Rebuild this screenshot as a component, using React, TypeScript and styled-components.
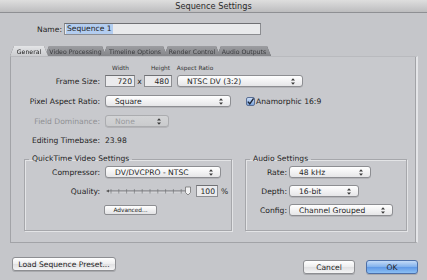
import React from "react";
import styled, { createGlobalStyle } from "styled-components";

const GlobalStyles = createGlobalStyle`
  html, body {
    margin: 0;
    padding: 0;
    background: #c5c6ca;
  }
  body {
    font-family: "DejaVu Sans", sans-serif;
    font-size: 7.6px;
    color: #1e1e1e;
  }
`;

const Window = styled.div`
  width: 427px;
  height: 280px;
  display: flex;
  flex-direction: column;
  overflow: hidden;
  background: #c5c6ca;
`;

const TitleBar = styled.div`
  height: 12px;
  flex: none;
  border-bottom: 1px solid #8e8f93;
  background: linear-gradient(#dedede, #bdbdbf);
  display: flex;
  align-items: center;
  justify-content: center;
  font-size: 8.2px;
  color: #2a2a2a;
`;

const Body = styled.div`
  display: flex;
  flex-direction: column;
  padding: 0 9px 0 10px;
`;

const NameRow = styled.div`
  display: flex;
  align-items: center;
  gap: 2px;
  margin-top: 10px;
  padding-left: 27px;
  height: 12px;
`;

const NameField = styled.div`
  width: 194px;
  height: 10px;
  border: 1px solid #8c8d91;
  border-top-color: #6f7074;
  background: #e9eaec;
  display: flex;
  align-items: center;
  padding-left: 1px;
`;

const Selected = styled.span`
  background: #b3cdf0;
  padding: 0 1px;
  line-height: 10px;
`;

const TabBar = styled.div`
  display: flex;
  margin-top: 11px;
  height: 10px;
  filter: drop-shadow(0 0 0.6px #55565a);
`;

const Tab = styled.div<{ $w: number; $active?: boolean }>`
  width: ${p => p.$w}px;
  margin-right: -3px;
  height: 10px;
  display: flex;
  align-items: center;
  justify-content: center;
  font-size: 6.2px;
  clip-path: polygon(4px 0, calc(100% - 4px) 0, 100% 100%, 0 100%);
  background: ${p => (p.$active ? "linear-gradient(#e4e5e7, #cacbce)" : "linear-gradient(#9c9da1, #85868a)")};
  color: ${p => (p.$active ? "#222" : "#3a3b3e")};
  position: relative;
  z-index: ${p => (p.$active ? 2 : 1)};
`;

const Panel = styled.div`
  height: 179px;
  border: 1px solid #a2a3a7;
  border-top-color: #b9babe;
  border-right: 2px solid #e4e5e8;
  box-shadow: inset -1px 0 0 #a2a3a7;
  background: #c8c9cd;
  display: flex;
  flex-direction: column;
  padding-top: 6px;
`;

const Rows = styled.div<{ $gap: number }>`
  display: flex;
  flex-direction: column;
  gap: ${p => p.$gap}px;
`;

const Row = styled.div<{ $gap?: number; $h?: number }>`
  display: flex;
  align-items: center;
  gap: ${p => p.$gap ?? 5}px;
  height: ${p => p.$h ?? 12}px;
`;

const Label = styled.div<{ $w: number; $disabled?: boolean }>`
  width: ${p => p.$w}px;
  flex: none;
  text-align: right;
  white-space: nowrap;
  color: ${p => (p.$disabled ? "#8f9094" : "#1e1e1e")};
`;

const Caption = styled.div<{ $w: number; $align?: string }>`
  width: ${p => p.$w}px;
  font-size: 5.8px;
  color: #333;
  text-align: ${p => p.$align ?? "center"};
`;

const NumField = styled.div<{ $w: number }>`
  width: ${p => p.$w}px;
  height: 10px;
  border: 1px solid #8c8d91;
  border-top-color: #707175;
  background: #ebebed;
  display: flex;
  align-items: center;
  justify-content: flex-end;
  padding-right: 2px;
  box-sizing: content-box;
`;

const Times = styled.span`
  width: 7px;
  text-align: center;
  margin: 0 -4px;
`;

const Select = styled.div<{ $w: number; $disabled?: boolean }>`
  width: ${p => p.$w}px;
  height: 10px;
  box-sizing: content-box;
  border: 1px solid ${p => (p.$disabled ? "#abacaf" : "#8d8e92")};
  border-radius: 3px;
  background: ${p => (p.$disabled ? "linear-gradient(#d3d4d6, #cacbcd)" : "linear-gradient(#ffffff, #e6e6e8)")};
  color: ${p => (p.$disabled ? "#9a9b9e" : "#1e1e1e")};
  display: flex;
  align-items: center;
  justify-content: space-between;
  padding: 0 7px 0 9px;
  box-shadow: 0 0.5px 0 #9fa0a4;
`;

const Check = styled.div`
  width: 7px;
  height: 7px;
  border: 1px solid #5a6f95;
  border-radius: 2px;
  background: linear-gradient(#c9dcf6, #7ea6de);
  display: flex;
  align-items: center;
  justify-content: center;
  margin-left: 10px;
  margin-right: -4px;
`;

const Groups = styled.div`
  display: flex;
  gap: 13px;
  margin-top: 8px;
  padding-left: 13px;
`;

const Group = styled.fieldset<{ $w: number }>`
  width: ${p => p.$w}px;
  height: 77px;
  margin: 0;
  padding: 2px 0 0;
  box-sizing: border-box;
  border: 1px solid #a6a7ab;
  box-shadow: inset 1px 1px 0 #e3e4e6, 1px 1px 0 #e3e4e6;
  display: flex;
  flex-direction: column;
  gap: 7px;
`;

const Legend = styled.legend`
  margin-left: 4px;
  padding: 0 3px;
  font-size: 7.6px;
  line-height: 10px;
`;

const Slider = styled.div`
  display: flex;
  align-items: center;
  gap: 3px;
`;

const Small = styled.button`
  font-family: inherit;
  font-size: 5.8px;
  width: 53px;
  height: 10px;
  padding: 0;
  margin: 2px 0 0 79px;
  border: 1px solid #8d8e92;
  border-radius: 2px;
  background: linear-gradient(#ffffff, #e2e2e4);
  color: #222;
`;

const Footer = styled.div`
  display: flex;
  align-items: flex-start;
  padding: 14px 0 0 2px;
`;

const Button = styled.button<{ $w: number; $primary?: boolean; $mt?: number }>`
  font-family: inherit;
  font-size: 7.6px;
  width: ${p => p.$w}px;
  height: 14px;
  padding: 0;
  margin-top: ${p => p.$mt ?? 0}px;
  border: 1px solid ${p => (p.$primary ? "#4c6fa8" : "#8d8e92")};
  border-radius: 3px;
  background: ${p => (p.$primary ? "linear-gradient(#c4dbf7, #80b0ec 50%, #5f98e6 51%, #8cc0f4)" : "linear-gradient(#ffffff, #ededee 50%, #e0e0e2 51%, #f4f4f5)")};
  color: #1e1e1e;
  box-shadow: 0 1px 0 #a8a9ad;
`;

const Spacer = styled.div`
  flex: 1;
`;

function Arrows() {
  return (
    <svg width="4" height="7" viewBox="0 0 4 7">
      <path d="M0 2.6 L2 0.2 L4 2.6 Z M0 4.4 L2 6.8 L4 4.4 Z" fill="#3a3a3a" />
    </svg>
  );
}

function Dropdown({ w, value, disabled }: { w: number; value: string; disabled?: boolean }) {
  return (
    <Select $w={w - 18} $disabled={disabled}>
      <span>{value}</span>
      <Arrows />
    </Select>
  );
}

function QualitySlider() {
  const ticks = Array.from({ length: 11 }, (_, i) => 6 + i * 7.8);
  return (
    <svg width="88" height="10" viewBox="0 0 88 10">
      <path d="M1 5 L4 3.5 L4 6.5 Z" fill="#555" />
      <line x1="4" y1="5" x2="83" y2="5" stroke="#6a6b6f" strokeWidth="1" />
      <line x1="4" y1="6" x2="83" y2="6" stroke="#e6e6e8" strokeWidth="0.6" />
      {ticks.map(x => (
        <line key={x} x1={x} y1="3" x2={x} y2="7.5" stroke="#6a6b6f" strokeWidth="0.6" />
      ))}
      <path d="M80.5 1 H85.5 V6.5 L83 9 L80.5 6.5 Z" fill="#f2f2f3" stroke="#666" strokeWidth="0.7" />
    </svg>
  );
}

export default function App() {
  return (
    <Window>
      <GlobalStyles />
      <TitleBar>Sequence Settings</TitleBar>
      <Body>
        <NameRow>
          <span>Name:</span>
          <NameField>
            <Selected>Sequence 1</Selected>
          </NameField>
        </NameRow>

        <TabBar>
          <Tab $w={38} $active>General</Tab>
          <Tab $w={61}>Video Processing</Tab>
          <Tab $w={64}>Timeline Options</Tab>
          <Tab $w={56}>Render Control</Tab>
          <Tab $w={54}>Audio Outputs</Tab>
        </TabBar>

        <Panel>
          <Rows $gap={8}>
            <Rows $gap={3}>
              <Row $h={9} $gap={0}>
                <Label $w={94} />
                <Caption $w={31}>Width</Caption>
                <Caption $w={10} />
                <Caption $w={29}>Height</Caption>
                <Caption $w={40} $align="left">&nbsp;Aspect Ratio</Caption>
              </Row>
              <Row>
                <Label $w={89}>Frame Size:</Label>
                <NumField $w={26}>720</NumField>
                <Times>x</Times>
                <NumField $w={24}>480</NumField>
                <Dropdown w={126} value="NTSC DV (3:2)" />
              </Row>
            </Rows>
            <Row>
              <Label $w={89}>Pixel Aspect Ratio:</Label>
              <Dropdown w={126} value="Square" />
              <Check>
                <svg width="7" height="7" viewBox="0 0 7 7">
                  <path d="M0.8 3.6 L2.8 5.8 L6.6 0.4" fill="none" stroke="#1b2436" strokeWidth="1.4" />
                </svg>
              </Check>
              <span>Anamorphic 16:9</span>
            </Row>
            <Row>
              <Label $w={89} $disabled>Field Dominance:</Label>
              <Dropdown w={64} value="None" disabled />
            </Row>
            <Row $h={11}>
              <Label $w={89}>Editing Timebase:</Label>
              <span>23.98</span>
            </Row>
          </Rows>

          <Groups>
            <Group $w={208}>
              <Legend>QuickTime Video Settings</Legend>
              <Row>
                <Label $w={75}>Compressor:</Label>
                <Dropdown w={116} value="DV/DVCPRO - NTSC" />
              </Row>
              <Row>
                <Label $w={75}>Quality:</Label>
                <Slider>
                  <QualitySlider />
                  <NumField $w={18}>100</NumField>
                  <span>%</span>
                </Slider>
              </Row>
              <Row $h={10}>
                <Small>Advanced...</Small>
              </Row>
            </Group>
            <Group $w={162}>
              <Legend>Audio Settings</Legend>
              <Row $gap={2}>
                <Label $w={41}>Rate:</Label>
                <Dropdown w={82} value="48 kHz" />
              </Row>
              <Row $gap={2}>
                <Label $w={41}>Depth:</Label>
                <Dropdown w={70} value="16-bit" />
              </Row>
              <Row $gap={2}>
                <Label $w={41}>Config:</Label>
                <Dropdown w={104} value="Channel Grouped" />
              </Row>
            </Group>
          </Groups>
        </Panel>

        <Footer>
          <Button $w={104}>Load Sequence Preset...</Button>
          <Spacer />
          <Button $w={52} $mt={3}>Cancel</Button>
          <Button $w={52} $mt={3} $primary style={{ marginLeft: 11 }}>OK</Button>
        </Footer>
      </Body>
    </Window>
  );
}
